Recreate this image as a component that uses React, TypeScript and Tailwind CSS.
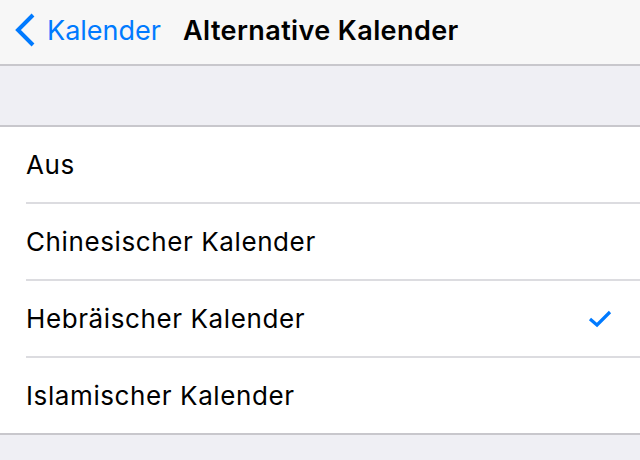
import React from 'react';

const options = [
    { label: 'Aus', checked: false },
    { label: 'Chinesischer Kalender', checked: false },
    { label: 'Hebräischer Kalender', checked: true },
    { label: 'Islamischer Kalender', checked: false },
];

const App = () => {
    return (
        <div className="w-[640px] h-[460px] overflow-hidden bg-[#efeff4] font-['Inter',sans-serif]">
            {/* Nav bar */}
            <div className="h-[66px] bg-[#f7f7f7] border-b-2 border-[#c8c7cc] flex items-center">
                <div className="flex items-center pl-[14px] text-[#007aff]">
                    <svg width="22" height="34" viewBox="0 0 22 34" className="mt-[-4px]">
                        <path d="M19 2 L4 17 L19 32" fill="none" stroke="#007aff" strokeWidth="4" />
                    </svg>
                    <span className="ml-[11px] text-[27px] leading-none mt-[-4px]">Kalender</span>
                </div>
                <h1 className="ml-[22px] text-[27px] font-semibold leading-none tracking-[0.4px] text-black mt-[-4px]">
                    Alternative Kalender
                </h1>
            </div>

            {/* Spacer band */}
            <div className="h-[59px]" />

            {/* List */}
            <div className="bg-white border-t-2 border-b-2 border-[#c8c7cc]">
                {options.map((opt, i) => (
                    <div key={opt.label} className="pl-[26px]">
                        <div
                            className={
                                'flex items-center pr-[28px] ' +
                                (i < options.length - 1 ? 'h-[77px] border-b-2 border-[#dcdce0]' : 'h-[75px]')
                            }
                        >
                            <span className="flex-1 text-[26px] tracking-[0.6px] text-black leading-none">{opt.label}</span>
                            {opt.checked && (
                                <svg width="24" height="19" viewBox="0 0 24 19">
                                    <path d="M2 10 L9 16 L22 3" fill="none" stroke="#007aff" strokeWidth="3.2" />
                                </svg>
                            )}
                        </div>
                    </div>
                ))}
            </div>
        </div>
    );
};

export default App;
